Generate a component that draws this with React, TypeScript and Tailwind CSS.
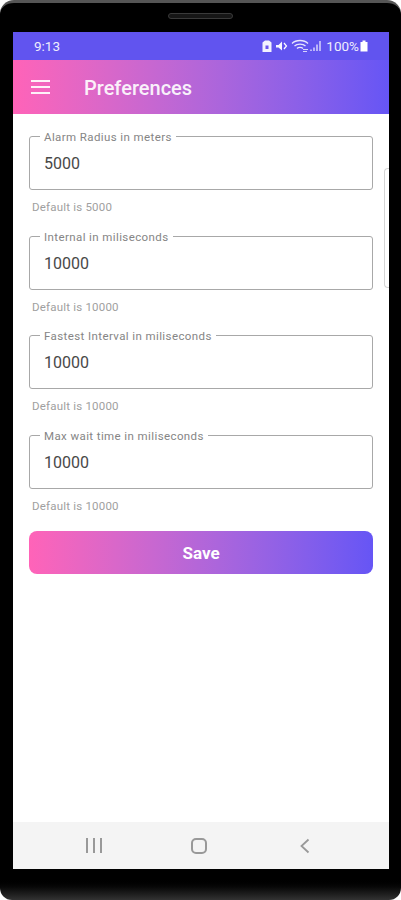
const fields = [
  { label: "Alarm Radius in meters", value: "5000", help: "Default is 5000" },
  { label: "Internal in miliseconds", value: "10000", help: "Default is 10000" },
  { label: "Fastest Interval in miliseconds", value: "10000", help: "Default is 10000" },
  { label: "Max wait time in miliseconds", value: "10000", help: "Default is 10000" },
];

function StatusIcons() {
  return (
    <svg width="60" height="14" viewBox="0 0 60 14" fill="none" className="shrink-0">
      <path d="M0.5 3.5 L3 1.5 H7 L9.5 3.5 V13 H0.5 Z" fill="#fff" opacity="0.92" />
      <rect x="3.5" y="6.5" width="3" height="3.5" fill="#6a55ee" />
      <path d="M14 6 H16.5 L20 2.5 V11.5 L16.5 8.5 H14 Z" fill="#fff" opacity="0.95" />
      <path d="M22 4 L24.5 7 L22 10" stroke="#fff" strokeWidth="1.2" />
      <path d="M30 4.5 C34 0.5 42 0.5 46 4.5 M32.5 7 C35 4.5 41 4.5 43.5 7 M35 9.5 C36.5 8 39.5 8 41 9.5" stroke="#fff" strokeWidth="1.3" opacity="0.85" />
      <path d="M41 10.5 H46 M41 12.5 H45" stroke="#fff" strokeWidth="1.1" opacity="0.75" />
      <path d="M49 12 V10.5 M52 12 V8.5 M55 12 V5.5 M58 12 V2" stroke="#fff" strokeWidth="1.4" opacity="0.8" />
    </svg>
  );
}

export default function App() {
  return (
    <div className="relative h-[900px] w-[401px] overflow-hidden bg-white font-['Roboto',sans-serif]">
      <div className="flex h-[900px] w-[401px] flex-col rounded-t-[14px] rounded-b-[12px] border-t-[3px] border-t-[#555] bg-gradient-to-b from-black from-[97.5%] to-[#333] pl-[13px] pr-[12px] pt-[29px]">
        <div className="absolute left-[168px] top-[13px] h-[6px] w-[65px] rounded-full border border-[#3a3a3a] bg-[#161616]" />
        <div className="relative flex h-[837px] flex-col bg-white">
          <div className="flex h-[28px] items-center bg-[#6154ef] pl-[21px] pr-[21px] text-white">
            <span className="text-[13.5px] opacity-90">9:13</span>
            <div className="ml-auto flex items-center">
              <StatusIcons />
              <span className="ml-[4px] text-[13.5px] opacity-90">100%</span>
              <svg width="8" height="12" viewBox="0 0 8 12" className="ml-[1px]">
                <path d="M2.5 0.5 H5.5 V2 H7.5 V11.5 H0.5 V2 H2.5 Z" fill="#fff" />
              </svg>
            </div>
          </div>
          <div className="flex h-[54px] items-center bg-gradient-to-r from-[#ff63b8] to-[#6655f5] pl-[18px] text-white">
            <div className="flex w-[19px] flex-col gap-[4px]">
              <div className="h-[2px] bg-white/90" />
              <div className="h-[2px] bg-white/90" />
              <div className="h-[2px] bg-white/90" />
            </div>
            <span className="ml-[34px] mt-[2px] text-[20px] font-medium opacity-90">Preferences</span>
          </div>
          <div className="flex flex-1 flex-col px-[16px] pt-[22px]">
            {fields.map((f) => (
              <div key={f.label} className="mb-[21.5px]">
                <div className="relative flex h-[54px] items-center rounded-[3px] border border-[#a8a8a8] pl-[15px] pt-[2px] text-[16px] text-[#484848]">
                  <span className="absolute left-[10px] top-[-7px] bg-white px-[4px] text-[11.5px] leading-[14px] tracking-[0.4px] text-[#858585]">
                    {f.label}
                  </span>
                  <span className="-ml-[1px]">{f.value}</span>
                </div>
                <div className="mt-[10px] pl-[3px] text-[11.5px] leading-[14px] tracking-[0.2px] text-[#a0a0a0]">{f.help}</div>
              </div>
            ))}
            <button className="-mt-[3px] h-[43px] rounded-[8px] bg-gradient-to-r from-[#ff63b8] to-[#6655f5] pt-[2px] text-[17px] font-bold text-white">
              Save
            </button>
          </div>
          <div className="absolute right-0 top-[136px] h-[120px] w-[5px] rounded-l-[4px] border border-r-0 border-[#d4d4d4]" />
          <div className="flex h-[47px] items-center bg-[#f4f4f4] pl-[73px]">
            <div className="flex gap-[5px]">
              <div className="h-[15px] w-[2px] bg-[#999]" />
              <div className="h-[15px] w-[2px] bg-[#999]" />
              <div className="h-[15px] w-[2px] bg-[#999]" />
            </div>
            <div className="ml-[89px] h-[16px] w-[16px] rounded-[5px] border-2 border-[#999]" />
            <svg width="10" height="16" viewBox="0 0 10 16" fill="none" className="ml-[93px]">
              <path d="M8.5 1.5 L1.5 8 L8.5 14.5" stroke="#999" strokeWidth="1.8" />
            </svg>
          </div>
        </div>
      </div>
    </div>
  );
}
